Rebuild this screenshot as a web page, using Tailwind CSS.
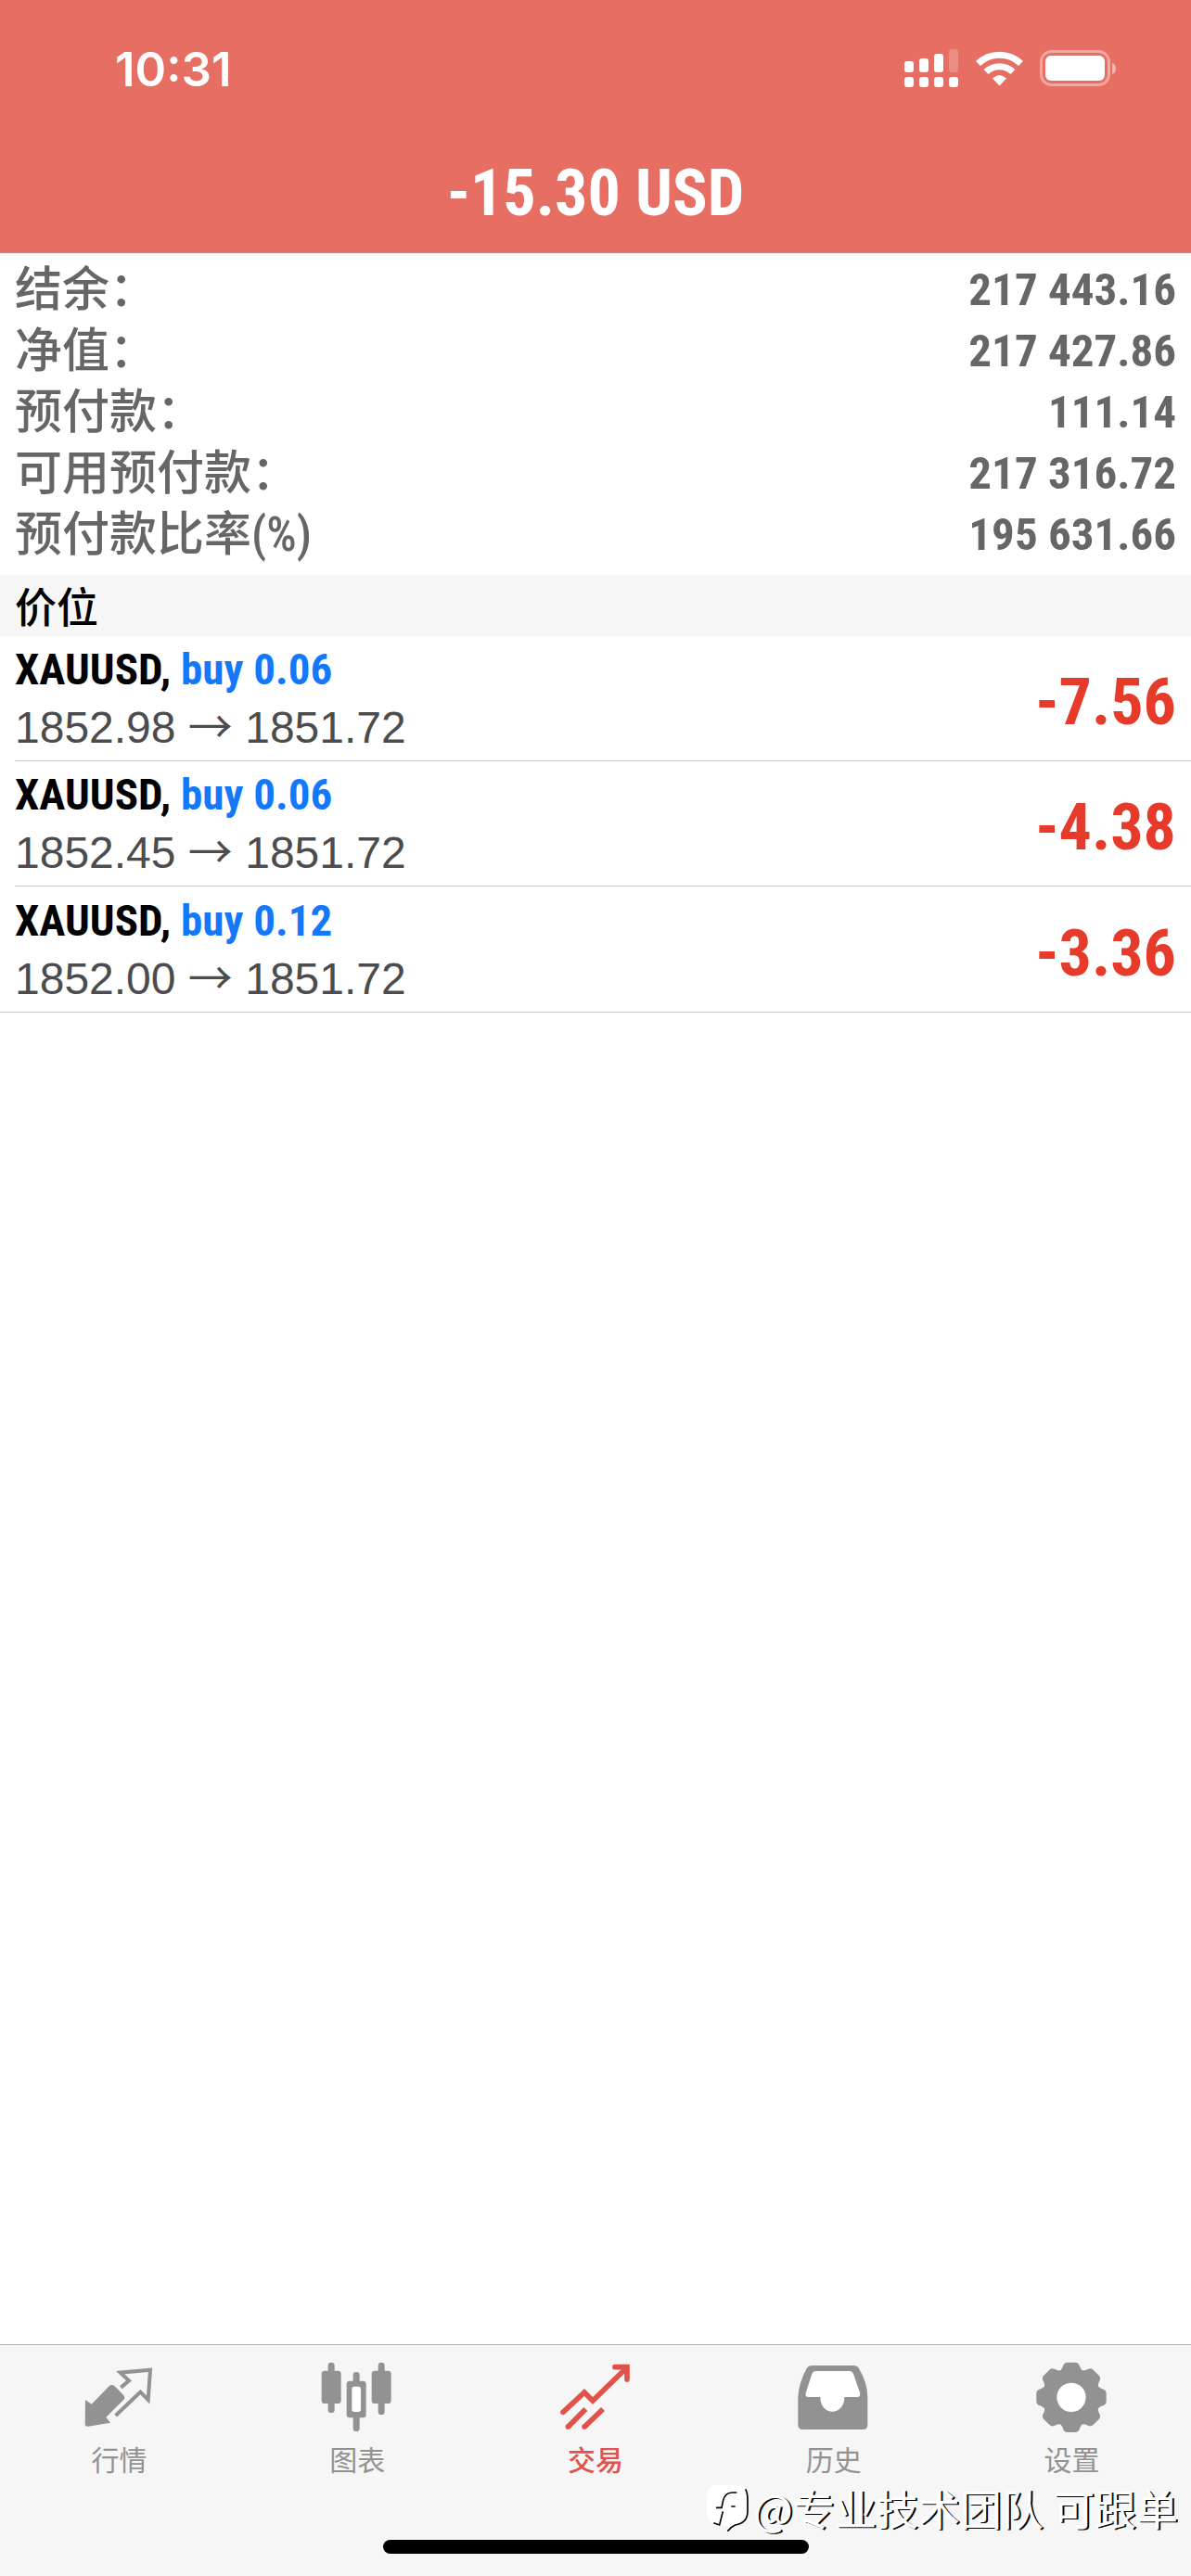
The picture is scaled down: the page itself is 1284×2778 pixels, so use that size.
<!DOCTYPE html>
<html lang="zh-CN">
<head>
    <meta charset="UTF-8">
    <meta name="viewport" content="width=device-width, initial-scale=1.0">
    <title>交易</title>
    <script src="https://cdn.jsdelivr.net/npm/@tailwindcss/browser@4"></script>
</head>
<body class="bg-white font-['Liberation_Sans','Noto_Sans_CJK_SC',sans-serif]">
    <div class="relative flex flex-col min-h-screen">

        <!-- Status bar + title -->
        <header class="bg-[#e66e62] text-white border-b border-[#c08a85]">
            <div class="flex items-center justify-between h-36 pl-31 pr-20 pt-1">
                <time class="font-['Inter',sans-serif] font-semibold text-[51px] leading-none">10:31</time>
                <div class="flex items-center gap-[18px]">
                    <svg class="w-[60px] h-[42px]" viewBox="0 0 60 42" fill="currentColor">
                        <rect x="1" y="13" width="10" height="12" rx="3"/>
                        <rect x="17" y="10" width="10" height="15" rx="3"/>
                        <rect x="33" y="5" width="10" height="20" rx="3"/>
                        <rect x="49" y="0" width="10" height="25" rx="3" opacity=".22"/>
                        <rect x="1" y="30" width="10" height="11" rx="3"/>
                        <rect x="17" y="30" width="10" height="11" rx="3"/>
                        <rect x="33" y="30" width="10" height="11" rx="3"/>
                        <rect x="49" y="30" width="10" height="11" rx="3"/>
                    </svg>
                    <svg class="w-[51px] h-[38px]" viewBox="0 0 51 38" fill="none" stroke="currentColor" stroke-width="7">
                        <path d="M2.500 13.500A33 33 0 0 1 48.500 13.500"/>
                        <path d="M11 22.500A21 21 0 0 1 40 22.500"/>
                        <path d="M25.500 37.500L18 29.500Q25.500 22.500 33 29.500Z" fill="currentColor" stroke="none"/>
                    </svg>
                    <svg class="w-[83px] h-[40px]" viewBox="0 0 83 40" fill="currentColor">
                        <rect x="1.500" y="1.500" width="73" height="36" rx="11" fill="none" stroke="currentColor" stroke-width="3" opacity=".4"/>
                        <rect x="6" y="6" width="64" height="27" rx="6"/>
                        <path d="M78 14Q82 15 82 20T78 26Z" opacity=".5"/>
                    </svg>
                </div>
            </div>
            <h1 class="h-32 text-center font-['Roboto_Condensed',sans-serif] font-bold text-[70px] leading-32">-15.30 USD</h1>
        </header>

        <main class="flex-1">
            <dl class="px-4 pt-[7px] pb-[10px] text-[51px] leading-[66px] font-['Roboto_Condensed','Noto_Sans_CJK_SC',sans-serif] text-[#666666]">
                <div class="flex justify-between">
                    <dt class="font-medium">结余：</dt>
                    <dd class="font-bold text-[49px]">217 443.16</dd>
                </div>
                <div class="flex justify-between">
                    <dt class="font-medium">净值：</dt>
                    <dd class="font-bold text-[49px]">217 427.86</dd>
                </div>
                <div class="flex justify-between">
                    <dt class="font-medium">预付款：</dt>
                    <dd class="font-bold text-[49px]">111.14</dd>
                </div>
                <div class="flex justify-between">
                    <dt class="font-medium">可用预付款：</dt>
                    <dd class="font-bold text-[49px]">217 316.72</dd>
                </div>
                <div class="flex justify-between">
                    <dt class="font-medium">预付款比率(%)</dt>
                    <dd class="font-bold text-[49px]">195 631.66</dd>
                </div>
            </dl>

            <h2 class="px-4 bg-[#f6f6f6] text-[45px] leading-[66px] font-medium font-['Noto_Sans_CJK_SC',sans-serif] text-black">价位</h2>

            <ul class="border-b border-[#c4c4c6]">
                <li class="flex items-center justify-between h-[135px] ml-4 pr-4 border-b border-[#c4c4c6]">
                    <div>
                        <p class="font-['Roboto_Condensed',sans-serif] font-bold text-[47px] leading-[63px] text-black">XAUUSD, <span class="text-[#1478fa]">buy 0.06</span></p>
                        <p class="text-[48px] leading-[63px] text-[#4c4c4e]">1852.98 <span class="font-['Noto_Sans_CJK_SC',sans-serif] leading-none">→</span> 1851.72</p>
                    </div>
                    <strong class="pt-2 font-['Roboto_Condensed',sans-serif] text-[70px] leading-none text-[#e63b2a]">-7.56</strong>
                </li>
                <li class="flex items-center justify-between h-[135px] ml-4 pr-4 border-b border-[#c4c4c6]">
                    <div>
                        <p class="font-['Roboto_Condensed',sans-serif] font-bold text-[47px] leading-[63px] text-black">XAUUSD, <span class="text-[#1478fa]">buy 0.06</span></p>
                        <p class="text-[48px] leading-[63px] text-[#4c4c4e]">1852.45 <span class="font-['Noto_Sans_CJK_SC',sans-serif] leading-none">→</span> 1851.72</p>
                    </div>
                    <strong class="pt-2 font-['Roboto_Condensed',sans-serif] text-[70px] leading-none text-[#e63b2a]">-4.38</strong>
                </li>
                <li class="flex items-center justify-between h-[135px] ml-4 pr-4">
                    <div>
                        <p class="font-['Roboto_Condensed',sans-serif] font-bold text-[47px] leading-[63px] text-black">XAUUSD, <span class="text-[#1478fa]">buy 0.12</span></p>
                        <p class="text-[48px] leading-[63px] text-[#4c4c4e]">1852.00 <span class="font-['Noto_Sans_CJK_SC',sans-serif] leading-none">→</span> 1851.72</p>
                    </div>
                    <strong class="pt-2 font-['Roboto_Condensed',sans-serif] text-[70px] leading-none text-[#e63b2a]">-3.36</strong>
                </li>
            </ul>
        </main>

        <!-- Tab bar -->
        <footer class="bg-[#f6f6f6] border-t border-[#b2b2b2] pt-[17px] pb-6">
            <nav class="grid grid-cols-5 font-['Noto_Sans_CJK_SC',sans-serif] text-[30px] leading-[44px] text-[#929292]">
                <a href="#" class="flex flex-col items-center gap-[5px]">
                    <svg class="w-[80px] h-[78px]" viewBox="145 108 240 234" fill="currentColor">
                        <path d="M157 234L177 248L234 190Q243 182 252 190L280 218Q288 227 280 235L224 290L238 308L166 320Q156 321 156 312Z"/>
                        <path d="M272 194L298 172L270 146L367 137L360 234L335 209L255 285" fill="none" stroke="currentColor" stroke-width="12"/>
                    </svg>
                    <span>行情</span>
                </a>
                <a href="#" class="flex flex-col items-center gap-[5px]">
                    <svg class="w-[80px] h-[78px]" viewBox="916 108 240 234" fill="currentColor">
                        <rect x="942" y="113" width="21" height="163" rx="10"/>
                        <rect x="921" y="140" width="63" height="106" rx="10"/>
                        <rect x="1104" y="113" width="21" height="169" rx="10"/>
                        <rect x="1083" y="140" width="63" height="106" rx="10"/>
                        <rect x="1023" y="144" width="21" height="192" rx="10"/>
                        <rect x="1002" y="173" width="63" height="119" rx="10"/>
                        <rect x="1019" y="191" width="29" height="82" rx="8" fill="#fff"/>
                    </svg>
                    <span>图表</span>
                </a>
                <a href="#" class="flex flex-col items-center gap-[5px] text-[#e0524a]" aria-current="page">
                    <svg class="w-[80px] h-[78px]" viewBox="126 108 240 234" fill="none" stroke="currentColor" stroke-width="17">
                        <path d="M141 274L210 210L237 237L345 132" stroke-linecap="round"/>
                        <path d="M309 128H348V168" stroke-linecap="round"/>
                        <path d="M325 125H350V155Z" fill="currentColor" stroke="none"/>
                        <path d="M157 322L214 264M210 322L270 264"/>
                        <path d="M157 321h.1M210 321h.1" stroke-linecap="round"/>
                    </svg>
                    <span class="font-medium">交易</span>
                </a>
                <a href="#" class="flex flex-col items-center gap-[5px]">
                    <svg class="w-[80px] h-[78px]" viewBox="896 108 240 234" fill="currentColor">
                        <path d="M945 123H1080Q1091 123 1097 133Q1125 180 1125 225V315Q1125 330 1110 330H915Q900 330 900 315V225Q902 180 928 133Q934 123 945 123Z"/>
                        <path d="M958 141H1066Q1075 141 1079 150L1100 210Q1103 225 1092 225H1050C1050 288 972 288 972 225H934Q922 225 925 212L945 150Q949 141 958 141Z" fill="#fff"/>
                    </svg>
                    <span>历史</span>
                </a>
                <a href="#" class="flex flex-col items-center gap-[5px]">
                    <svg class="w-[80px] h-[78px]" viewBox="-117 -118 240 234" fill="currentColor">
                        <defs>
                            <path id="tooth" d="M-40 -84Q-32 -88 -29 -96L-26 -104Q-22 -113 -13 -113H13Q22 -113 26 -104L29 -96Q32 -88 40 -84Z"/>
                        </defs>
                        <circle r="92"/>
                        <use href="#tooth"/>
                        <use href="#tooth" transform="rotate(45)"/>
                        <use href="#tooth" transform="rotate(90)"/>
                        <use href="#tooth" transform="rotate(135)"/>
                        <use href="#tooth" transform="rotate(180)"/>
                        <use href="#tooth" transform="rotate(225)"/>
                        <use href="#tooth" transform="rotate(270)"/>
                        <use href="#tooth" transform="rotate(315)"/>
                        <circle r="47" fill="#fff"/>
                    </svg>
                    <span>设置</span>
                </a>
            </nav>
            <!-- Home indicator -->
            <div class="mx-auto mt-[66px] h-[15px] w-[459px] rounded-full bg-black"></div>
        </footer>

        <!-- Watermark -->
        <div class="absolute right-[14px] bottom-10 flex items-center gap-1 text-white">
            <svg class="w-[46px] h-[52px]" viewBox="0 0 138 156" fill="#fff">
                <path d="M38 3H92Q130 3 130 43V92Q130 128 92 132Q76 136 66 152L70 134H41Q4 126 0 95V43Q0 3 38 3Z"/>
                <path d="M97 27H82Q58 27 52 56L48 76H30M52 88L41 132L22 125M79 72H92M125 16Q132 28 132 50V88Q132 126 92 132Q78 138 67 152" fill="none" stroke="#000" stroke-width="5"/>
            </svg>
            <span class="font-['Noto_Sans_CJK_SC',sans-serif] text-[45px] leading-[66px] text-shadow-[2px_1px_0_#000]">@专业技术团队 可跟单</span>
        </div>
    </div>
</body>
</html>
